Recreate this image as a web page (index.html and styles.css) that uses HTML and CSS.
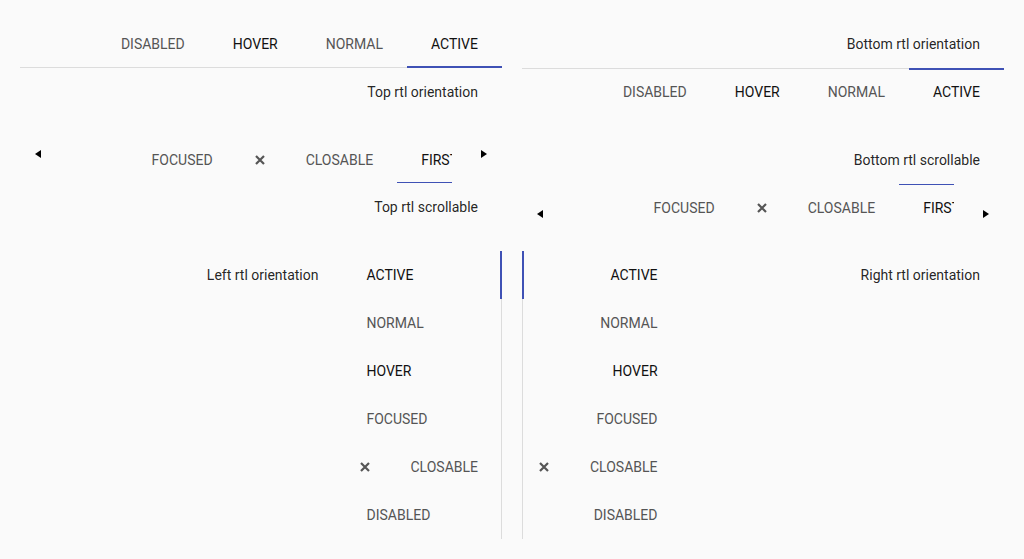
FILE: index.html
```html
<!DOCTYPE html>
<html lang="en">
<head>
<meta charset="utf-8">
<title>RTL tabs</title>
<link rel="stylesheet" href="styles.css">
</head>
<body>
<div class="page">
  <section class="block">
    <div class="tabbar tabbar-top">
      <div class="tab tab-muted">DISABLED</div>
      <div class="tab tab-dark">HOVER</div>
      <div class="tab tab-muted">NORMAL</div>
      <div class="tab tab-dark active-bottom">ACTIVE</div>
    </div>
    <div class="caption">Top rtl orientation</div>
  </section>

  <section class="block">
    <div class="caption">Bottom rtl orientation</div>
    <div class="tabbar tabbar-bottom">
      <div class="tab tab-muted">DISABLED</div>
      <div class="tab tab-dark">HOVER</div>
      <div class="tab tab-muted">NORMAL</div>
      <div class="tab tab-dark active-top">ACTIVE</div>
    </div>
  </section>

  <section class="block">
    <div class="scroller scroller-top">
      <button class="arrow"><span class="tri tri-left"></span></button>
      <div class="viewport">
        <div class="strip">
          <div class="tab tab-muted">FOCUSED</div>
          <div class="tab tab-muted tab-closable"><span class="close"><svg viewBox="0 0 10 10" width="10" height="10"><path d="M1 1L9 9M9 1L1 9"/></svg></span><span>CLOSABLE</span></div>
          <div class="tab tab-dark thin-bottom">FIRST</div>
        </div>
      </div>
      <button class="arrow"><span class="tri tri-right"></span></button>
    </div>
    <div class="caption caption-up">Top rtl scrollable</div>
  </section>

  <section class="block">
    <div class="caption">Bottom rtl scrollable</div>
    <div class="scroller scroller-bottom">
      <button class="arrow"><span class="tri tri-left"></span></button>
      <div class="viewport">
        <div class="strip">
          <div class="tab tab-muted">FOCUSED</div>
          <div class="tab tab-muted tab-closable"><span class="close"><svg viewBox="0 0 10 10" width="10" height="10"><path d="M1 1L9 9M9 1L1 9"/></svg></span><span>CLOSABLE</span></div>
          <div class="tab tab-dark thin-top">FIRST</div>
        </div>
      </div>
      <button class="arrow"><span class="tri tri-right"></span></button>
    </div>
  </section>

  <section class="vertical">
    <div class="caption vcaption">Left rtl orientation</div>
    <div class="vlist vlist-left">
      <div class="vtab tab-dark active-right">ACTIVE</div>
      <div class="vtab tab-muted">NORMAL</div>
      <div class="vtab tab-dark">HOVER</div>
      <div class="vtab tab-muted">FOCUSED</div>
      <div class="vtab tab-muted tab-closable"><span class="close"><svg viewBox="0 0 10 10" width="10" height="10"><path d="M1 1L9 9M9 1L1 9"/></svg></span><span>CLOSABLE</span></div>
      <div class="vtab tab-muted">DISABLED</div>
    </div>
  </section>

  <section class="vertical">
    <div class="vlist vlist-right">
      <div class="vtab tab-dark active-left">ACTIVE</div>
      <div class="vtab tab-muted">NORMAL</div>
      <div class="vtab tab-dark">HOVER</div>
      <div class="vtab tab-muted">FOCUSED</div>
      <div class="vtab tab-muted tab-closable"><span class="close"><svg viewBox="0 0 10 10" width="10" height="10"><path d="M1 1L9 9M9 1L1 9"/></svg></span><span>CLOSABLE</span></div>
      <div class="vtab tab-muted">DISABLED</div>
    </div>
    <div class="caption vcaption">Right rtl orientation</div>
  </section>
</div>
</body>
</html>
```

FILE: styles.css
```css
html, body {
  margin: 0;
  padding: 0;
  background: #fafafa;
  overflow: hidden;
}

body {
  font-family: Roboto, "Liberation Sans", Arial, sans-serif;
  font-size: 14px;
  color: rgba(0, 0, 0, 0.87);
}

.page {
  display: grid;
  grid-template-columns: 1fr 1fr;
  column-gap: 20px;
  row-gap: 20px;
  padding: 20px 20px 0;
}

.block {
  display: flex;
  flex-direction: column;
}

.caption {
  height: 48px;
  line-height: 48px;
  text-align: right;
  padding-right: 24px;
  white-space: nowrap;
}

.caption-up {
  line-height: 46px;
}

.tabbar {
  display: flex;
  justify-content: flex-end;
  height: 48px;
}

.tabbar-top {
  box-shadow: inset 0 -1px 0 #dcdcdc;
}

.tabbar-bottom {
  box-shadow: inset 0 1px 0 #dcdcdc;
}

.tab {
  flex: none;
  display: flex;
  align-items: center;
  height: 48px;
  padding: 0 24px;
  white-space: nowrap;
  box-sizing: border-box;
}

.tab-dark {
  color: #111;
}

.tab-muted {
  color: #555;
}

.active-bottom {
  box-shadow: inset 0 -2px 0 #3f51b5;
}

.active-top {
  box-shadow: inset 0 2px 0 #3f51b5;
}

.thin-bottom {
  box-shadow: inset 0 -1px 0 #3f51b5;
}

.thin-top {
  box-shadow: inset 0 1px 0 #3f51b5;
}

/* scrollable */
.scroller {
  display: flex;
  height: 48px;
}

.arrow {
  flex: none;
  width: 36px;
  height: 36px;
  padding: 0;
  border: none;
  background: none;
  display: flex;
  align-items: center;
  justify-content: center;
}

.scroller-top .arrow {
  align-self: flex-start;
}

.scroller-bottom .arrow {
  align-self: flex-end;
}

.tri {
  width: 0;
  height: 0;
  border-top: 4px solid transparent;
  border-bottom: 4px solid transparent;
}

.tri-left {
  border-right: 6px solid #000;
}

.tri-right {
  border-left: 6px solid #000;
}

.viewport {
  flex: 1;
  min-width: 0;
  overflow: hidden;
  display: flex;
  justify-content: flex-end;
  margin-right: 14px;
}

.strip {
  flex: none;
  display: flex;
  margin-right: -30px;
}

.scroller-top .thin-bottom {
  height: 47px;
  align-self: flex-start;
  padding-top: 1px;
}

/* vertical */
.vertical {
  display: flex;
}

.vcaption {
  flex: 1;
  margin-top: -1px;
}

.vlist {
  flex: none;
  display: flex;
  flex-direction: column;
  margin-top: -1px;
}

.vlist-left {
  box-shadow: inset -1px 0 0 #dcdcdc;
}

.vlist-right {
  box-shadow: inset 1px 0 0 #dcdcdc;
}

.vtab {
  display: flex;
  align-items: center;
  height: 48px;
  padding: 0 24px;
  white-space: nowrap;
}

.vlist-left .vtab {
  justify-content: flex-start;
}

.vlist-right .vtab {
  justify-content: flex-end;
}

.active-right {
  box-shadow: inset -2px 0 0 #3f51b5;
}

.active-left {
  box-shadow: inset 2px 0 0 #3f51b5;
}

/* closable tabs (after .vtab so the padding wins) */
.tab-closable {
  padding-left: 11px;
}

.close {
  width: 24px;
  height: 24px;
  margin-right: 34px;
  display: flex;
  align-items: center;
  justify-content: center;
  flex: none;
}

.close svg {
  stroke: #555;
  stroke-width: 2.2;
  fill: none;
}

.vlist-left .tab-closable {
  padding-left: 11px;
}

.vlist-left .tab-closable .close {
  margin-right: 33px;
}

.vlist-right .tab-closable {
  padding-left: 10px;
}
```
